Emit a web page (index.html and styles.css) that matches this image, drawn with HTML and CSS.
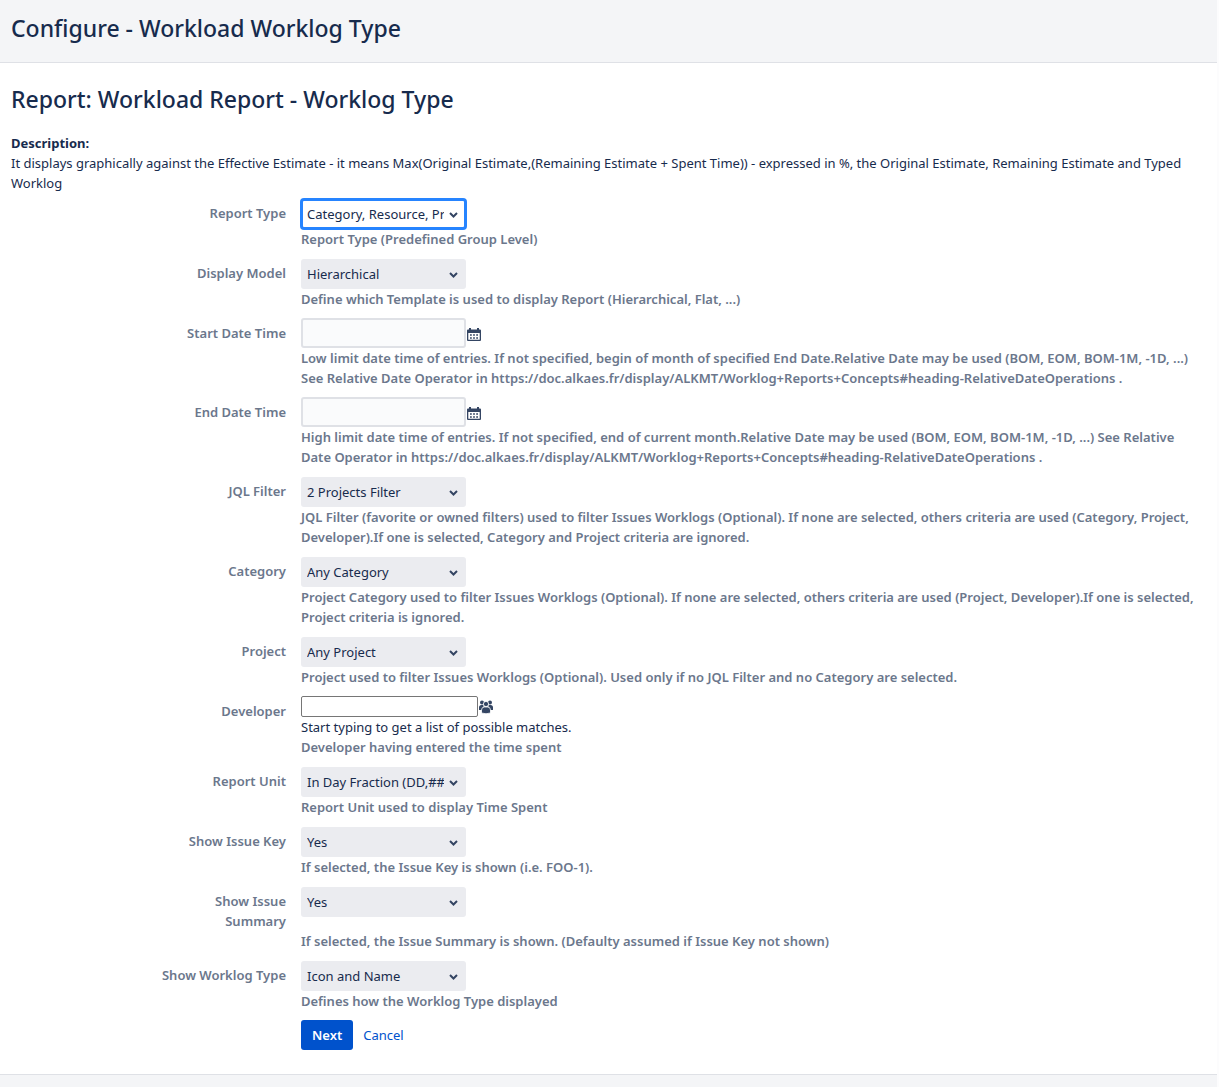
FILE: index.html
```html
<!DOCTYPE html>
<html lang="en">

<head>
  <meta charset="UTF-8">
  <meta name="viewport" content="width=device-width, initial-scale=1.0">
  <title>Configure - Workload Worklog Type</title>
  <link rel="stylesheet" href="styles.css">
</head>

<body>
  <header class="page-header">
    <h1>Configure - Workload Worklog Type</h1>
  </header>
  <main class="content">
    <h2>Report: Workload Report - Worklog Type</h2>
    <div class="report-description">
      <strong>Description:</strong>
      <p>It displays graphically against the Effective Estimate - it means Max(Original Estimate,(Remaining Estimate + Spent Time)) - expressed in %, the Original Estimate, Remaining Estimate and Typed Worklog</p>
    </div>
    <form class="report-form">
      <div class="field-group">
        <label for="report-type">Report Type</label>
        <div class="field">
          <select id="report-type" class="select active">
            <option>Category, Resource, Project</option>
          </select>
        </div>
        <div class="description">Report Type (Predefined Group Level)</div>
      </div>
      <div class="field-group">
        <label for="display-model">Display Model</label>
        <div class="field">
          <select id="display-model" class="select">
            <option>Hierarchical</option>
          </select>
        </div>
        <div class="description">Define which Template is used to display Report (Hierarchical, Flat, ...)</div>
      </div>
      <div class="field-group">
        <label for="start-date">Start Date Time</label>
        <div class="field">
          <input type="text" id="start-date" class="text">
          <a href="#" class="trigger" aria-label="Select a date">
            <svg class="icon" viewBox="0 0 16 16"><use href="#icon-calendar"/></svg>
          </a>
        </div>
        <div class="description">Low limit date time of entries. If not specified, begin of month of specified End Date.Relative Date may be used (BOM, EOM, BOM-1M, -1D, ...) See Relative Date Operator in https://doc.alkaes.fr/display/ALKMT/Worklog+Reports+Concepts#heading-RelativeDateOperations .</div>
      </div>
      <div class="field-group">
        <label for="end-date">End Date Time</label>
        <div class="field">
          <input type="text" id="end-date" class="text">
          <a href="#" class="trigger" aria-label="Select a date">
            <svg class="icon" viewBox="0 0 16 16"><use href="#icon-calendar"/></svg>
          </a>
        </div>
        <div class="description">High limit date time of entries. If not specified, end of current month.Relative Date may be used (BOM, EOM, BOM-1M, -1D, ...) See Relative Date Operator in https://doc.alkaes.fr/display/ALKMT/Worklog+Reports+Concepts#heading-RelativeDateOperations .</div>
      </div>
      <div class="field-group">
        <label for="jql-filter">JQL Filter</label>
        <div class="field">
          <select id="jql-filter" class="select">
            <option>2 Projects Filter</option>
          </select>
        </div>
        <div class="description">JQL Filter (favorite or owned filters) used to filter Issues Worklogs (Optional). If none are selected, others criteria are used (Category, Project, Developer).If one is selected, Category and Project criteria are ignored.</div>
      </div>
      <div class="field-group">
        <label for="category">Category</label>
        <div class="field">
          <select id="category" class="select">
            <option>Any Category</option>
          </select>
        </div>
        <div class="description">Project Category used to filter Issues Worklogs (Optional). If none are selected, others criteria are used (Project, Developer).If one is selected, Project criteria is ignored.</div>
      </div>
      <div class="field-group">
        <label for="project">Project</label>
        <div class="field">
          <select id="project" class="select">
            <option>Any Project</option>
          </select>
        </div>
        <div class="description">Project used to filter Issues Worklogs (Optional). Used only if no JQL Filter and no Category are selected.</div>
      </div>
      <div class="field-group">
        <label for="developer">Developer</label>
        <div>
          <div class="field">
            <input type="text" id="developer" class="user-picker">
            <a href="#" class="trigger" aria-label="Select a user">
              <svg class="icon" viewBox="0 0 16 16"><use href="#icon-group"/></svg>
            </a>
          </div>
          <div class="hint">Start typing to get a list of possible matches.</div>
        </div>
        <div class="description">Developer having entered the time spent</div>
      </div>
      <div class="field-group">
        <label for="report-unit">Report Unit</label>
        <div class="field">
          <select id="report-unit" class="select">
            <option>In Day Fraction (DD,##)</option>
          </select>
        </div>
        <div class="description">Report Unit used to display Time Spent</div>
      </div>
      <div class="field-group">
        <label for="show-key">Show Issue Key</label>
        <div class="field">
          <select id="show-key" class="select">
            <option>Yes</option>
          </select>
        </div>
        <div class="description">If selected, the Issue Key is shown (i.e. FOO-1).</div>
      </div>
      <div class="field-group">
        <label for="show-summary">Show Issue Summary</label>
        <div class="field">
          <select id="show-summary" class="select">
            <option>Yes</option>
          </select>
        </div>
        <div class="description">If selected, the Issue Summary is shown. (Defaulty assumed if Issue Key not shown)</div>
      </div>
      <div class="field-group">
        <label for="show-type">Show Worklog Type</label>
        <div class="field">
          <select id="show-type" class="select">
            <option>Icon and Name</option>
          </select>
        </div>
        <div class="description">Defines how the Worklog Type displayed</div>
      </div>
      <div class="buttons">
        <button type="submit" class="button">Next</button>
        <a href="#" class="cancel">Cancel</a>
      </div>
    </form>
  </main>

  <svg class="sprite" width="0" height="0">
    <symbol id="icon-calendar" viewBox="0 0 16 16">
      <path fill-rule="evenodd" d="M3 1h2v1.500h6V1h2v1.500h1a1 1 0 0 1 1 1V13a1 1 0 0 1-1 1H2a1 1 0 0 1-1-1V3.500a1 1 0 0 1 1-1h1zM2.300 6v6.700h11.400V6z"/>
      <path d="M4 7.200h1.800v1.600H4zM7.100 7.200h1.800v1.600H7.100zM10.200 7.200h1.800v1.600h-1.800zM4 10.200h1.800v1.600H4zM7.100 10.200h1.800v1.600H7.100zM10.200 10.200h1.800v1.600h-1.800z"/>
    </symbol>
    <symbol id="icon-group" viewBox="0 0 16 16">
      <circle cx="4" cy="3.500" r="2"/>
      <circle cx="12" cy="3.500" r="2"/>
      <path d="M1 11V8.500q0-2.500 2.500-2.500h2v5zM15 11V8.500q0-2.500-2.500-2.500h-2v5z"/>
      <g stroke="#fff" stroke-width=".8">
        <circle cx="8" cy="5" r="2.600"/>
        <path d="M3.500 14v-3q0-3 3-3h3q3 0 3 3v3q-4.500 1.500-9 0z"/>
      </g>
    </symbol>
  </svg>
</body>

</html>
```

FILE: styles.css
```css
*,
*:after,
*:before {
  box-sizing: border-box;
}

html {
  background-color: #fcfcfd;
}

body {
  display: flex;
  flex-direction: column;
  margin: 0 2px 0 0;
  min-height: 100vh;
  background-color: #f4f5f7;
  color: #172b4d;
  font-family: "Segoe UI", "Noto Sans", "Open Sans", sans-serif;
  font-size: 13px;
  line-height: 20px;
}

h1,
h2,
p {
  margin: 0;
}

h1,
h2 {
  font-size: 23px;
  font-weight: 500;
  line-height: 28px;
}

a {
  color: #0052cc;
  text-decoration: none;
}

.page-header {
  padding: 14px 11px 20px;
}

.content {
  padding: 22px 11px 24px;
  border-top: 1px solid #dfe1e6;
  border-bottom: 1px solid #dfe1e6;
  background-color: #fff;
}

.report-description {
  margin-top: 20px;
}

.report-form {
  display: grid;
  gap: 9px;
  margin-top: 5px;
}

.field-group {
  display: grid;
  grid-template-columns: 130px 1fr;
  column-gap: 15px;
  padding-left: 145px;
}

.field-group label {
  padding-top: 5px;
  text-align: right;
}

.field-group label,
.description {
  color: #6b778c;
  font-weight: 600;
}

.description {
  grid-column: 2;
}

.field {
  display: flex;
  align-items: flex-start;
}

.select,
.text {
  width: 165px;
  height: 30px;
  border: 2px solid #dfe1e6;
  border-radius: 3px;
  background-color: #fafbfc;
  color: #172b4d;
  font: inherit;
}

.select {
  appearance: none;
  margin: 1px 0 0;
  padding: 0 20px 0 4px;
  border-color: #ebecf0;
  background: #ebecf0 url("data:image/svg+xml,%3Csvg xmlns='http://www.w3.org/2000/svg' width='10' height='8'%3E%3Cpath d='M1 3L4.500 6.500 8 3' fill='none' stroke='%23344563' stroke-width='2'/%3E%3C/svg%3E") no-repeat right 5px center;
}

.select.active {
  border-color: #2684ff;
  background-color: #fff;
  box-shadow: 0 0 0 1px #2684ff;
}

.user-picker {
  width: 177px;
  height: 21px;
  border: 1px solid #767676;
  border-radius: 2px;
  font: inherit;
}

.trigger {
  align-self: center;
}

.text + .trigger {
  padding-top: 4px;
}

.icon {
  display: block;
  width: 16px;
  height: 16px;
  fill: #344563;
}

.sprite {
  position: absolute;
}

.buttons {
  display: flex;
  align-items: center;
  gap: 10px;
  padding-left: 290px;
}

.button {
  height: 30px;
  padding: 0 11px;
  border: 0;
  border-radius: 3px;
  background-color: #0052cc;
  color: #fff;
  font: inherit;
  font-weight: 600;
}
```
